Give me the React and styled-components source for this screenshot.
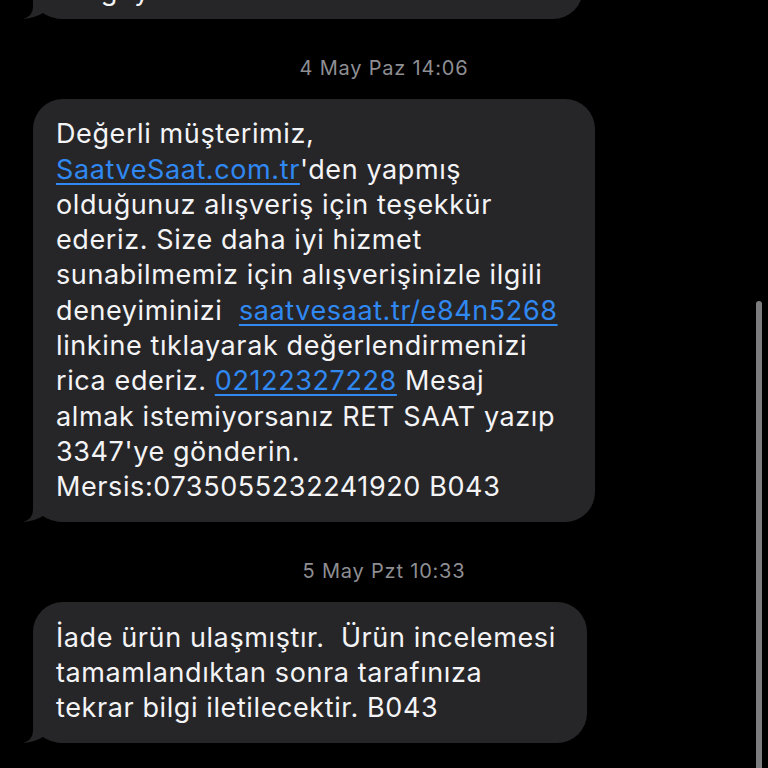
import React from 'react';
import styled, { createGlobalStyle } from 'styled-components';

const GlobalStyle = createGlobalStyle`
  html, body {
    margin: 0;
    padding: 0;
    background: #000;
    overflow: hidden;
  }
  body {
    font-family: Inter, "Noto Sans", "Liberation Sans", sans-serif;
    -webkit-font-smoothing: antialiased;
  }
`;

const L = (text) => ({ link: text });

const messages = [
  {
    width: 550,
    padBottom: 11,
    lines: [['Kargoya verildi. B043']],
  },
  {
    stamp: '4 May Paz 14:06',
    width: 562,
    lines: [
      ['Değerli müşterimiz,'],
      [L('SaatveSaat.com.tr'), "'den yapmış"],
      ['olduğunuz alışveriş için teşekkür'],
      ['ederiz. Size daha iyi hizmet'],
      ['sunabilmemiz için alışverişinizle ilgili'],
      ['deneyiminizi  ', L('saatvesaat.tr/e84n5268')],
      ['linkine tıklayarak değerlendirmenizi'],
      ['rica ederiz. ', L('02122327228'), ' Mesaj'],
      ['almak istemiyorsanız RET SAAT yazıp'],
      ["3347'ye gönderin."],
      ['Mersis:0735055232241920 B043'],
    ],
  },
  {
    stamp: '5 May Pzt 10:33',
    width: 554,
    lines: [
      ['İade ürün ulaşmıştır.  Ürün incelemesi'],
      ['tamamlandıktan sonra tarafınıza'],
      ['tekrar bilgi iletilecektir. B043'],
    ],
  },
];

const App = () => {
  return (
    <>
      <GlobalStyle />
      <Thread>
        {messages.map((m, i) => (
          <React.Fragment key={i}>
            {m.stamp && <Stamp>{m.stamp}</Stamp>}
            <Bubble $width={m.width} $padBottom={m.padBottom}>
              {m.lines.map((line, j) => (
                <Line key={j}>
                  {line.map((seg, k) =>
                    typeof seg === 'string' ? (
                      <React.Fragment key={k}>{seg}</React.Fragment>
                    ) : (
                      <Link key={k}>{seg.link}</Link>
                    )
                  )}
                </Line>
              ))}
              <Tail viewBox="0 0 42 30" aria-hidden="true">
                <path d="M12 0 L12 18 Q12 27 2 30 Q14 29 22 24 Q28 29 42 30 L42 0 Z" />
              </Tail>
            </Bubble>
          </React.Fragment>
        ))}
      </Thread>
      <ScrollThumb />
    </>
  );
};

const Thread = styled.div`
  display: flex;
  flex-direction: column;
  align-items: flex-start;
  padding: 0 33px;
  margin-top: -45px;
`;

const Stamp = styled.div`
  align-self: stretch;
  margin: 37px -33px 19px;
  text-align: center;
  color: #8e8e93;
  font-size: 20px;
  line-height: 24px;
  letter-spacing: 0.8px;
`;

const Bubble = styled.div`
  position: relative;
  isolation: isolate;
  box-sizing: border-box;
  width: ${(p) => p.$width}px;
  padding: 17.5px 20px ${(p) => p.$padBottom ?? 17.5}px 23px;
  background: #262629;
  border-radius: 30px;
  color: #f4f4f6;
  font-size: 27px;
  line-height: 35.3px;
  letter-spacing: 0.6px;
`;

const Line = styled.div`
  white-space: pre;
`;

const Link = styled.span`
  color: #3088f2;
  text-decoration: underline;
  text-decoration-thickness: 2px;
  text-underline-offset: 4px;
`;

const Tail = styled.svg`
  position: absolute;
  z-index: -1;
  left: -12px;
  bottom: 0;
  width: 42px;
  height: 30px;
  fill: #262629;
`;

const ScrollThumb = styled.div`
  position: fixed;
  left: 756px;
  top: 301px;
  width: 6px;
  height: 480px;
  border-radius: 3px;
  background: #7c7c7e;
`;

export default App;
